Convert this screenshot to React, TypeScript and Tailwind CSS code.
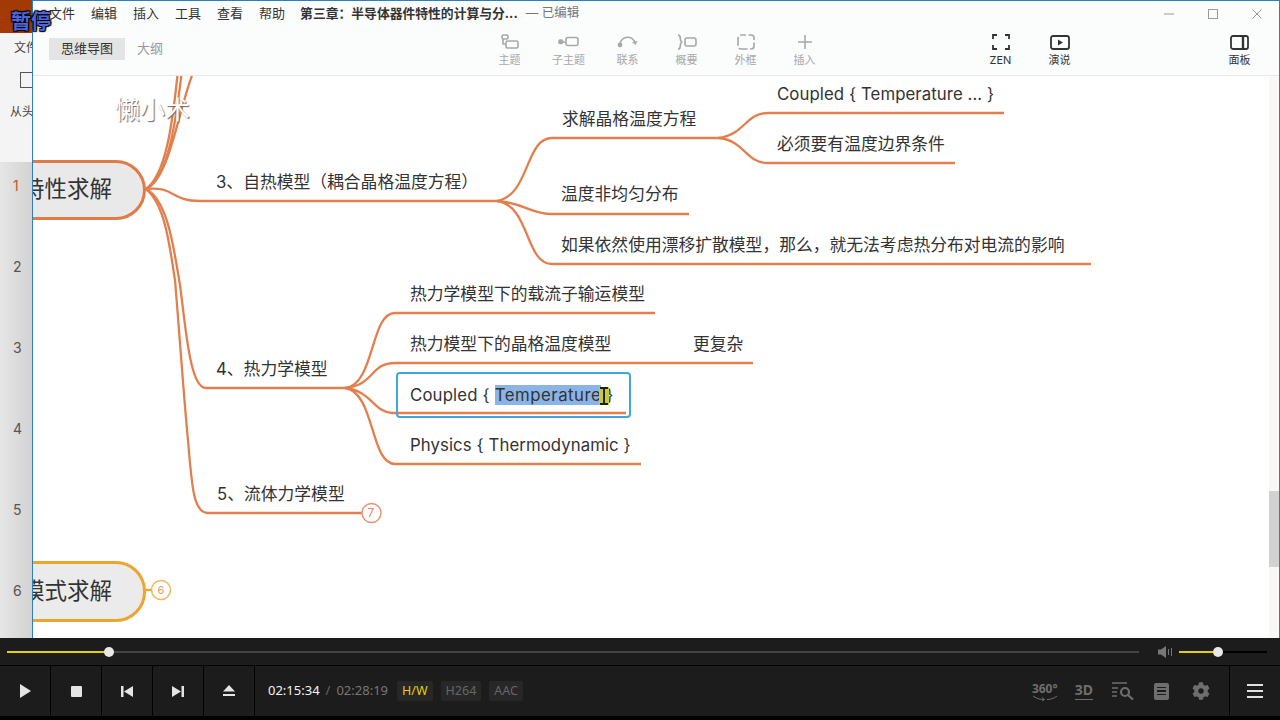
import { FaCog } from "react-icons/fa";

const font = "font-['Inter','Noto_Sans_CJK_SC',sans-serif]";

const menus = ["文件", "编辑", "插入", "工具", "查看", "帮助"];
const slideNumbers = ["1", "2", "3", "4", "5", "6"];

const links = [
  // main topic to subtopics
  "M146 189 C165 175 172 130 178 70",
  "M146 189 C167 178 175 130 182 70",
  "M146 189 C170 178 178 110 194 70",
  "M146 189 C175 186 170 201 200 201 L497 201",
  "M146 189 C168 200 174 250 180 285 C186 330 190 388 206 388 L345 388",
  "M146 189 C166 205 170 250 175 280 C180 340 184 400 188 440 C192 490 194 513 208 513 L362 513",
  // 3
  "M497 201 C530 195 525 138 552 138 L718 138",
  "M718 138 C745 135 745 113 768 113 L1004 113",
  "M718 138 C745 140 745 163 768 163 L955 163",
  "M497 201 C525 203 530 214 552 214 L689 214",
  "M497 201 C530 205 525 264 552 264 L1091 264",
  // 4
  "M345 388 C375 385 370 313 395 313 L655 313",
  "M345 388 C375 385 370 363 395 363 L753 363",
  "M345 388 C370 390 375 413 392 413 L626 413",
  "M345 388 C375 392 370 464 395 464 L641 464",
];

const labels = [
  { text: "3、自热模型（耦合晶格温度方程）", pos: "left-[183px] top-[94px]" },
  { text: "4、热力学模型", pos: "left-[183px] top-[281px]" },
  { text: "5、流体力学模型", pos: "left-[184px] top-[406px]" },
  { text: "求解晶格温度方程", pos: "left-[529px] top-[31px]" },
  { text: "Coupled { Temperature ... }", pos: "left-[744px] top-[6px] tracking-[0.07px]" },
  { text: "必须要有温度边界条件", pos: "left-[744px] top-[56px]" },
  { text: "温度非均匀分布", pos: "left-[528px] top-[106px]" },
  { text: "如果依然使用漂移扩散模型，那么，就无法考虑热分布对电流的影响", pos: "left-[528px] top-[157px]" },
  { text: "热力学模型下的载流子输运模型", pos: "left-[377px] top-[206px]" },
  { text: "热力模型下的晶格温度模型", pos: "left-[377px] top-[256px]" },
  { text: "更复杂", pos: "left-[660px] top-[256px]" },
  { text: "Physics { Thermodynamic }", pos: "left-[377px] top-[357px] tracking-[0.07px]" },
];

function ToolIcon({ name }: { name: string }) {
  const common = { fill: "none", stroke: "currentColor", strokeWidth: 1.6 };
  return (
    <svg width="22" height="20" viewBox="0 0 22 20" {...common}>
      {name === "topic" && (
        <>
          <rect x="3" y="3" width="6" height="4" rx="1.5" />
          <path d="M4 7 V12 H7" />
          <rect x="7" y="9" width="12" height="7" rx="1.5" />
        </>
      )}
      {name === "sub" && (
        <>
          <rect x="1" y="8" width="3.5" height="3.5" rx="1" fill="currentColor" />
          <path d="M4 10 H8" />
          <rect x="8" y="5.5" width="12" height="8" rx="2" />
        </>
      )}
      {name === "link" && (
        <>
          <path d="M3 11 C6 4 14 3 18 10" />
          <circle cx="3" cy="13" r="1.6" fill="currentColor" />
          <path d="M15 10 L18.5 13 L20.5 9" fill="currentColor" stroke="none" />
        </>
      )}
      {name === "summary" && (
        <>
          <path d="M2 3 C5 3 4 5 4.5 8 C4.8 9.5 6 10 6.5 10 C6 10 4.8 10.5 4.5 12 C4 15 5 17 2 17" />
          <rect x="9" y="6" width="11" height="8" rx="2" />
        </>
      )}
      {name === "frame" && (
        <rect x="3" y="3" width="16" height="14" rx="3" strokeDasharray="9 2.5" strokeDashoffset="4" strokeWidth="1.7" />
      )}
      {name === "plus" && <path d="M11 3 V17 M4 10 H18" />}
    </svg>
  );
}

const tools = [
  { icon: "topic", label: "主题" },
  { icon: "sub", label: "子主题" },
  { icon: "link", label: "联系" },
  { icon: "summary", label: "概要" },
  { icon: "frame", label: "外框" },
  { icon: "plus", label: "插入" },
];

function Tool({ label, children, dark }: { label: string; children: React.ReactNode; dark?: boolean }) {
  return (
    <div className={`flex w-[59px] flex-col items-center pt-[5px] ${dark ? "text-[#333]" : "text-[#a8a8a8]"}`}>
      <div className="flex h-[22px] items-center">{children}</div>
      <span className="text-[11px] leading-[14px]">{label}</span>
    </div>
  );
}

function Sliver() {
  return (
    <div className="flex w-[32px] shrink-0 flex-col overflow-hidden">
      <div className="h-[33px] bg-[#a33a05]" />
      <div className="flex h-[129px] flex-col bg-[#f4f4f4] text-[12px] text-[#444]">
        <span className="mt-[7px] ml-[14px] leading-[16px] whitespace-nowrap">文件</span>
        <div className="mt-[16px] ml-[20px] h-[16px] w-[20px] shrink-0 border border-[#555]" />
        <span className="mt-[16px] ml-[10px] leading-[16px] whitespace-nowrap">从头开始</span>
      </div>
      <div className="flex flex-1 flex-col gap-[61px] bg-gradient-to-r from-[#e6e6e6] to-[#d2d2d2] pt-[14px] pl-[13px] text-[14px] leading-[20px] text-[#555]">
        {slideNumbers.map((n) => (
          <span key={n} className={n === "1" ? "text-[#c0562a]" : ""}>
            {n}
          </span>
        ))}
      </div>
    </div>
  );
}

function MindMap() {
  return (
    <div className="relative flex-1 overflow-hidden bg-white text-[16.8px] leading-[24px] text-[#333]">
      <svg className="absolute top-0 left-0" width="1236" height="562" viewBox="33 76 1236 562" fill="none">
        {links.map((d) => (
          <path key={d} d={d} stroke="#e27f4e" strokeWidth="2.3" />
        ))}
        <path d="M146 590 H152" stroke="#eca52f" strokeWidth="2.5" />
        <circle cx="371.5" cy="513" r="9.5" fill="#fff" stroke="#e8947a" strokeWidth="1.5" />
        <circle cx="161" cy="590" r="9.5" fill="#fff" stroke="#f0b860" strokeWidth="1.5" />
      </svg>

      {/* main topics, cut by the window's edge */}
      <div className="absolute top-[84px] left-[-60px] flex h-[60px] w-[173px] items-center justify-end rounded-r-[30px] border-[3px] border-[#e07b45] bg-[#e9e9e9] pr-[31px] pb-[2px] text-[22.5px] whitespace-nowrap text-[#333]">
        特性求解
      </div>
      <div className="absolute top-[485px] left-[-60px] flex h-[61px] w-[173px] items-center justify-end rounded-r-[30px] border-[3px] border-[#eca52f] bg-[#ebebeb] pr-[31px] pb-[2px] text-[22.5px] whitespace-nowrap text-[#333]">
        模式求解
      </div>

      {labels.map((l) => (
        <span key={l.text} className={`absolute whitespace-nowrap ${l.pos}`}>
          {l.text}
        </span>
      ))}

      {/* topic being edited */}
      <div className="absolute top-[296px] left-[363px] h-[46px] w-[235px] rounded-[4px] border-2 border-[#3ea7dc]" />
      <span className="absolute top-[307px] left-[377px] whitespace-nowrap tracking-[0.15px]">
        Coupled {"{ "}
        <span className="bg-[#8ab4e8] tracking-[0.5px]">Temperature</span>
        {" }"}
      </span>
      <svg className="absolute top-[311px] left-[565px]" width="12" height="18" viewBox="0 0 12 18" fill="none">
        <rect x="1" y="0" width="10" height="18" fill="#c9c93c" />
        <path d="M2 1 H10 M2 17 H10 M6 1 V17" stroke="#23230a" strokeWidth="2" />
      </svg>

      <span className="absolute top-[427px] left-[330px] w-[16px] text-center text-[12px] leading-[20px] text-[#e08a70]">7</span>
      <span className="absolute top-[504px] left-[123px] w-[10px] text-center text-[11px] leading-[20px] text-[#e89a70]">6</span>
    </div>
  );
}

function XMindWindow() {
  return (
    <div className="flex min-w-0 flex-1 flex-col border-x border-t border-[#2f7fbd] bg-white">
      <div className="flex h-[25px] items-center bg-[#fbfcfc] pl-4 text-[13px] text-[#333]">
        <div className="flex gap-[16px]">
          {menus.map((m) => (
            <span key={m}>{m}</span>
          ))}
        </div>
        <span className="ml-[15px] text-[12.8px] font-bold">第三章：半导体器件特性的计算与分...</span>
        <span className="ml-[8px] text-[12.5px] text-[#777]">— 已编辑</span>
        <div className="mr-[17px] ml-auto flex items-center gap-[34px] text-[#999]">
          <svg width="10" height="10" viewBox="0 0 10 10" stroke="currentColor">
            <path d="M0 5 H10" />
          </svg>
          <svg width="10" height="10" viewBox="0 0 10 10" fill="none" stroke="currentColor">
            <rect x="0.5" y="0.5" width="9" height="9" />
          </svg>
          <svg width="10" height="10" viewBox="0 0 10 10" stroke="currentColor">
            <path d="M0.5 0.5 L9.5 9.5 M9.5 0.5 L0.5 9.5" />
          </svg>
        </div>
      </div>

      <div className="flex h-[50px] border-b border-[#e8e8e8] bg-[#fbfcfc] text-[13px]">
        <div className="ml-4 flex w-[431px] items-start gap-[12px] pt-[12px]">
          <span className="flex h-[22px] w-[76px] items-center justify-center bg-[#e4e4e4] text-[#333]">思维导图</span>
          <span className="flex h-[22px] items-center text-[#999]">大纲</span>
        </div>
        {tools.map((t) => (
          <Tool key={t.label} label={t.label}>
            <ToolIcon name={t.icon} />
          </Tool>
        ))}
        <div className="ml-[137px] flex">
          <Tool label="ZEN" dark>
            <svg width="18" height="16" viewBox="0 0 18 16" fill="none" stroke="currentColor" strokeWidth="1.8">
              <path d="M1 5 V1 H5 M13 1 H17 V5 M17 11 V15 H13 M5 15 H1 V11" />
            </svg>
          </Tool>
          <Tool label="演说" dark>
            <svg width="20" height="15" viewBox="0 0 20 15" fill="none" stroke="currentColor" strokeWidth="1.8">
              <rect x="1" y="1" width="18" height="13" rx="2" />
              <path d="M8 4.5 L13 7.5 L8 10.5 Z" fill="currentColor" stroke="none" />
            </svg>
          </Tool>
        </div>
        <div className="ml-[121px]">
          <Tool label="面板" dark>
            <svg width="19" height="15" viewBox="0 0 19 15" fill="none" stroke="currentColor" strokeWidth="1.8">
              <rect x="1" y="1" width="17" height="13" rx="2" />
              <path d="M13 1 V14" strokeWidth="2.4" />
            </svg>
          </Tool>
        </div>
      </div>

      <div className="flex flex-1">
        <MindMap />
        <div className="w-[10px] shrink-0 bg-[#f9f8f6] pt-[415px]">
          <div className="h-[76px] bg-[#d2d2d2]" />
        </div>
      </div>
    </div>
  );
}

function ControlButton({ children }: { children: React.ReactNode }) {
  return <div className="flex w-[51px] items-center justify-center border-r border-black text-[#e4e4e4]">{children}</div>;
}

function Badge({ children, yellow }: { children: React.ReactNode; yellow?: boolean }) {
  return (
    <span className={`flex h-[20px] items-center rounded-[2px] bg-[#272727] px-[5px] text-[12.5px] ${yellow ? "text-[#e6cf00]" : "text-[#666]"}`}>
      {children}
    </span>
  );
}

function Player() {
  return (
    <div className="flex h-[82px] shrink-0 flex-col bg-[#1c1c1c] font-['Noto_Sans',sans-serif]">
      <div className="flex h-[28px] items-center border-b border-black">
        <div className="relative ml-[7px] h-[2px] w-[1132px] bg-[#444]">
          <div className="h-full w-[102px] bg-[#e6cf00]" />
          <div className="absolute top-[-4px] left-[97px] h-[10px] w-[10px] rounded-full bg-[#e8e8e8]" />
        </div>
        <svg className="ml-[19px] text-[#777]" width="14" height="12" viewBox="0 0 14 12" fill="currentColor">
          <path d="M0 3.5 H3 L8 0 V12 L3 8.5 H0 Z" />
          <path d="M10 3 H11 V9 H10 Z M13 2 H14 V10 H13 Z" />
        </svg>
        <div className="relative ml-[7px] h-[2px] w-[88px] bg-black">
          <div className="h-full w-[39px] bg-[#e6cf00]" />
          <div className="absolute top-[-4px] left-[34px] h-[10px] w-[10px] rounded-full bg-[#e8e8e8]" />
        </div>
      </div>

      <div className="flex h-[50px] items-stretch">
        <ControlButton>
          <svg width="12" height="14" viewBox="0 0 12 14" fill="currentColor">
            <path d="M1 0 L12 7 L1 14 Z" />
          </svg>
        </ControlButton>
        <ControlButton>
          <div className="h-[11px] w-[11px] rounded-[1px] bg-[#e4e4e4]" />
        </ControlButton>
        <ControlButton>
          <svg width="12" height="11" viewBox="0 0 12 11" fill="currentColor">
            <path d="M0 0 H2.5 V11 H0 Z M12 0 V11 L3 5.5 Z" />
          </svg>
        </ControlButton>
        <ControlButton>
          <svg width="12" height="11" viewBox="0 0 12 11" fill="currentColor">
            <path d="M0 0 L9 5.5 L0 11 Z M9.5 0 H12 V11 H9.5 Z" />
          </svg>
        </ControlButton>
        <ControlButton>
          <svg width="12" height="12" viewBox="0 0 12 12" fill="currentColor">
            <path d="M6 0 L12 6.5 H0 Z M0 9 H12 V11 H0 Z" />
          </svg>
        </ControlButton>

        <div className="ml-[13px] flex items-center text-[13px]">
          <span className="text-[#f2f2f2]">02:15:34</span>
          <span className="mx-[6px] text-[#666]">/</span>
          <span className="text-[#777]">02:28:19</span>
          <div className="ml-[9px] flex gap-[8px]">
            <Badge yellow>H/W</Badge>
            <Badge>H264</Badge>
            <Badge>AAC</Badge>
          </div>
        </div>

        <div className="ml-auto flex items-center text-[#6e6e6e]">
          <div className="relative flex w-[28px] flex-col items-center">
            <span className="text-[12px] leading-[13px] font-bold">360°</span>
            <svg width="26" height="6" viewBox="0 0 26 6" fill="none" stroke="currentColor" strokeWidth="1">
              <path d="M1 1 C5 4 9 4.5 12 4.5 M25 1 C22 3.5 18 4.5 15 4.5 M10 2.5 L12.5 4.5 L10 6" />
            </svg>
          </div>
          <div className="ml-[16px] flex flex-col items-center border-b border-[#6e6e6e] pb-[2px]">
            <span className="text-[14px] leading-[15px] font-bold">3D</span>
          </div>
          <svg className="ml-[19px]" width="22" height="18" viewBox="0 0 22 18" fill="none" stroke="currentColor" strokeWidth="1.4">
            <path d="M0 1 H15 M0 6 H6 M0 10 H5 M0 14 H5" />
            <circle cx="13" cy="10" r="4" strokeWidth="2.2" />
            <path d="M16 13 L21 17.5" strokeWidth="2.2" />
          </svg>
          <div className="ml-[20px] flex h-[17px] w-[15px] flex-col justify-center gap-[2px] rounded-[2px] bg-[#6e6e6e] px-[3px]">
            <div className="h-[1.5px] bg-[#1c1c1c]" />
            <div className="h-[1.5px] bg-[#1c1c1c]" />
            <div className="h-[1.5px] bg-[#1c1c1c]" />
          </div>
          <FaCog className="ml-[23px]" size={18} />
          <div className="ml-[19px] flex h-full w-[51px] flex-col items-center justify-center gap-[4px] border-l border-black">
            <div className="h-[2px] w-[16px] bg-[#e0e0e0]" />
            <div className="h-[2px] w-[16px] bg-[#e0e0e0]" />
            <div className="h-[2px] w-[16px] bg-[#e0e0e0]" />
          </div>
        </div>
      </div>
      <div className="flex-1 bg-black" />
    </div>
  );
}

export default function App() {
  return (
    <div className={`relative flex h-screen flex-col overflow-hidden bg-black ${font}`}>
      <div className="flex min-h-0 flex-1">
        <Sliver />
        <XMindWindow />
      </div>
      <Player />

      {/* overlays burnt into the video */}
      <span className="absolute top-[9px] left-[11px] text-[20px] leading-[26px] font-bold text-[#4c66dc] [text-shadow:1px_1px_1px_#000,-1px_-1px_1px_#000,1px_-1px_1px_#000,-1px_1px_1px_#000]">
        暂停
      </span>
      <span className="absolute top-[94px] left-[115px] text-[25px] leading-[32px] text-white [text-shadow:1px_1px_1px_#666]">
        懒小术
      </span>
    </div>
  );
}
